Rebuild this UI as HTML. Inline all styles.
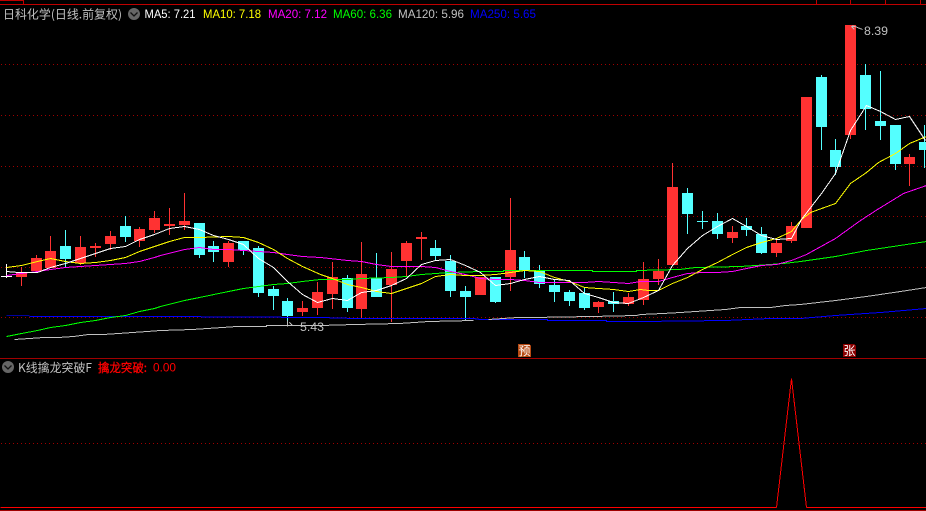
<!DOCTYPE html>
<html><head><meta charset="utf-8"><title>日科化学</title>
<style>
html,body{margin:0;padding:0;background:#000;width:926px;height:511px;overflow:hidden}
svg{display:block;position:absolute;left:0;top:0}
text{font-family:"Liberation Sans","WenQuanYi Zen Hei",sans-serif;font-size:12px}
.c{font-family:"WenQuanYi Zen Hei","Noto Sans CJK SC",sans-serif;font-size:12px}
</style></head><body>
<svg width="926" height="511" viewBox="0 0 926 511" xmlns="http://www.w3.org/2000/svg">
<rect width="926" height="511" fill="#000"/>
<g shape-rendering="crispEdges">
<!-- frame -->
<path fill="#c00000" d="M0 4h926v1H0zM0 0h23v1H0zM23 0h1v4h-1zM816 0h1v4h-1zM850 0h1v4h-1zM885 0h1v4h-1zM920 0h1v4h-1z"/>
<path fill="#a00000" d="M0 358h926v1H0zM0 510h926v1H0z"/>
<!-- grid -->
<g stroke="#a00000" stroke-width="1" stroke-dasharray="1 3" fill="none" transform="translate(0,.5)">
<path d="M1 64H926M1 115H926M1 166H926M1 216H926M1 267H926M1 317H926M1 443H926"/>
</g>
<!-- red candles -->
<path fill="#ff3232" d="M21 267h1v19h-1zM16 272h11v5H16zM36 255h1v16h-1zM31 258h11v13H31zM50 236h1v32h-1zM45 251h11v17H45zM80 236h1v29h-1zM75 247h11v16H75zM95 243h1v14h-1zM90 246h11v2H90zM110 231h1v19h-1zM105 236h11v8h-11zM139 227h1v20h-1zM134 229h11v12h-11zM154 211h1v22h-1zM149 218h11v12h-11zM169 208h1v27h-1zM164 224h11v2h-11zM184 193h1v37h-1zM179 221h11v4h-11zM228 241h1v26h-1zM223 243h11v19h-11zM302 301h1v15h-1zM297 308h11v4h-11zM317 282h1v33h-1zM312 292h11v16h-11zM332 262h1v47h-1zM327 277h11v17h-11zM361 242h1v76h-1zM356 274h11v35h-11zM391 252h1v70h-1zM386 269h11v16h-11zM406 241h1v36h-1zM401 243h11v18h-11zM421 232h1v28h-1zM416 237h11v2h-11zM475 277h11v18h-11zM510 198h1v93h-1zM505 250h11v27h-11zM598 301h1v12h-1zM593 302h11v5h-11zM628 293h1v13h-1zM623 297h11v7h-11zM643 262h1v43h-1zM638 279h11v21h-11zM658 259h1v26h-1zM653 271h11v8h-11zM672 163h1v102h-1zM667 187h11v78h-11zM732 226h1v17h-1zM727 232h11v6h-11zM776 240h1v17h-1zM771 243h11v10h-11zM791 222h1v21h-1zM786 226h11v15h-11zM801 97h11v131h-11zM850 25h1v114h-1zM845 25h11v110h-11zM909 154h1v32h-1zM904 157h11v7h-11z"/>
<!-- cyan candles -->
<path fill="#54ffff" d="M65 230h1v37h-1zM60 246h11v13H60zM125 216h1v26h-1zM120 226h11v11h-11zM199 223h1v35h-1zM194 223h11v32h-11zM213 241h1v21h-1zM208 246h11v6h-11zM243 241h1v14h-1zM238 241h11v9h-11zM258 246h1v51h-1zM253 248h11v45h-11zM273 286h1v24h-1zM268 289h11v7h-11zM287 298h1v27h-1zM282 301h11v15h-11zM347 275h1v37h-1zM342 278h11v30h-11zM376 253h1v44h-1zM371 278h11v19h-11zM435 240h1v20h-1zM430 248h11v8h-11zM450 255h1v42h-1zM445 261h11v30h-11zM465 286h1v34h-1zM460 291h11v6h-11zM495 277h1v26h-1zM490 277h11v25h-11zM524 251h1v27h-1zM519 257h11v13h-11zM539 265h1v23h-1zM534 270h11v14h-11zM554 280h1v22h-1zM549 285h11v7h-11zM569 290h1v16h-1zM564 292h11v9h-11zM584 288h1v22h-1zM579 293h11v15h-11zM613 292h1v20h-1zM608 301h11v3h-11zM687 188h1v46h-1zM682 193h11v21h-11zM702 211h1v18h-1zM697 221h11v1h-11zM717 213h1v26h-1zM712 221h11v13h-11zM746 218h1v18h-1zM741 226h11v4h-11zM761 227h1v27h-1zM756 234h11v19h-11zM821 75h1v75h-1zM816 77h11v50h-11zM835 139h1v36h-1zM830 150h11v17h-11zM865 64h1v66h-1zM860 75h11v34h-11zM880 71h1v69h-1zM875 121h11v5h-11zM895 125h1v45h-1zM890 125h11v39h-11zM924 125h1v43h-1zM919 142h7v8h-7z"/>
<path fill="#fff" d="M6 264h1v14H6zM1 276h11v1H1z"/>
<!-- MA lines -->
<g fill="none" stroke-width="1" transform="translate(.5,.5)">
<polyline stroke="#0000a0" points="6,315 29,315"/>
<polyline stroke="#0000ff" points="29,316 160,316 320,317 355,318 473,318 480,319 547,319 547,320 606,320 606,321 640,321 725,320 769,318 800,318 835,315 880,312 926,308"/>
<polyline stroke="#c0c0c0" points="14,339 29,338 43,337 58,337 73,336 88,334 103,334 118,333 132,332 147,331 160,330 192,329 222,327 236,326 266,326 266,325 320,325 354,324 399,323 414,322 428,321 473,320"/>
<polyline stroke="#c0c0c0" points="488,319 517,317 532,317 591,316 636,315 640,314 662,313 680,312 710,310 725,309 740,307 770,307 785,305 800,304 835,300 866,296 900,291 926,287"/>
<polyline stroke="#00ff00" points="6,336 21,333 37,330 50,327 65,325 80,322 95,320 110,317 125,315 139,311 154,308 160,306 184,300 199,297 228,291 243,288 258,286 273,284 287,283 302,281 320,279 347,279 361,278 391,277 406,276 421,274 435,273 450,272 480,271 503,271 503,270 547,270 592,270 592,271 636,271 636,270 679,269 695,267 740,266 755,265 783,263 800,261 835,256 866,250 926,241"/>
<polyline stroke="#ff00ff" points="6,275 21,273 37,271 50,269 65,267 80,266 95,265 110,264 125,263 139,261 154,257 160,255 184,249 199,247 213,249 228,249 243,250 258,251 273,252 287,254 302,256 320,257 347,260 361,261 376,264 391,266 421,266 435,267 450,271 465,274 480,278 495,279 510,279 524,280 539,282 569,282 584,282 598,281 613,282 628,283 640,281 658,281 672,277 687,273 702,272 717,272 732,271 746,268 761,265 776,264 791,260 806,254 835,238 860,220 877,209 903,193 926,185"/>
<polyline stroke="#ffff00" points="6,267 21,265 37,261 50,258 65,261 80,263 95,262 110,260 125,257 139,251 154,246 169,241 184,237 199,237 228,236 243,237 258,242 273,249 287,258 302,266 320,274 332,278 347,284 361,287 376,291 391,293 406,288 421,283 435,276 450,274 465,275 480,275 495,274 510,272 524,270 539,271 554,277 569,281 584,287 598,288 613,289 628,291 640,289 648,290 658,290 672,283 687,277 702,269 717,262 732,254 746,247 761,242 776,238 791,231 801,219 810,212 835,203 850,183 866,172 878,162 895,153 909,143 926,136"/>
<polyline stroke="#ffffff" points="6,271 18,272 37,272 50,267 65,263 80,258 95,253 110,248 125,246 139,239 154,234 169,228 184,226 199,229 213,235 228,239 243,244 258,258 273,267 287,281 302,294 317,302 332,298 347,300 361,292 376,290 391,285 406,278 421,264 435,260 450,259 465,265 480,272 495,285 510,283 524,279 539,276 554,279 569,280 584,293 598,297 613,302 628,303 643,297 658,290 672,265 687,248 702,235 717,226 732,218 746,226 761,235 776,239 791,238 801,219 821,193 835,173 850,130 866,105 880,111 895,119 909,116 925,140"/>
<!-- leaders -->
<path stroke="#c0c0c0" d="M287 320V326M288 325H298M289 322L292 325M852 25L862 29M851 26H855M851 26L854 29"/>
<!-- indicator -->
<polyline stroke="#ff0000" points="776,507 791,378 806,507"/>
<path stroke="#ff0000" d="M0 507H776M806 507H926"/>
</g>
<!-- badges -->
<path fill="#b84a12" d="M518 344h11l2 2v11h-13z"/>
<path fill="#8b0000" d="M843 344h11l2 2v11h-13z"/>
</g>
<text class="c" x="518.500" y="355" fill="#fff" textLength="12" lengthAdjust="spacingAndGlyphs">预</text>
<text class="c" x="843.500" y="355" fill="#fff" textLength="12" lengthAdjust="spacingAndGlyphs">张</text>
<!-- header -->
<text class="c" x="3" y="18.500" fill="#c0c0c0" textLength="119" lengthAdjust="spacingAndGlyphs">日科化学(日线.前复权)</text>
<circle cx="134" cy="14" r="6" fill="#666"/>
<path d="M130.500 12.500L134 16L137.500 12.500" fill="none" stroke="#111" stroke-width="1.300"/>
<text x="144.500" y="18" fill="#ffffff" textLength="51" lengthAdjust="spacingAndGlyphs">MA5: 7.21</text>
<text x="203" y="18" fill="#ffff00" textLength="58" lengthAdjust="spacingAndGlyphs">MA10: 7.18</text>
<text x="268" y="18" fill="#ff00ff" textLength="59" lengthAdjust="spacingAndGlyphs">MA20: 7.12</text>
<text x="333" y="18" fill="#00ff00" textLength="59" lengthAdjust="spacingAndGlyphs">MA60: 6.36</text>
<text x="398" y="18" fill="#c0c0c0" textLength="66" lengthAdjust="spacingAndGlyphs">MA120: 5.96</text>
<text x="470" y="18" fill="#0000ff" textLength="66" lengthAdjust="spacingAndGlyphs">MA250: 5.65</text>
<text x="864" y="35" fill="#c0c0c0" textLength="24" lengthAdjust="spacingAndGlyphs">8.39</text>
<text x="300" y="331" fill="#c0c0c0" textLength="24" lengthAdjust="spacingAndGlyphs">5.43</text>
<!-- lower panel header -->
<circle cx="8" cy="367" r="6" fill="#666"/>
<path d="M4.500 365.500L8 369L11.500 365.500" fill="none" stroke="#111" stroke-width="1.300"/>
<text class="c" x="18" y="372" fill="#c0c0c0" textLength="74" lengthAdjust="spacingAndGlyphs">K线擒龙突破F</text>
<text class="c" x="98" y="372" fill="#ff0000" stroke="#ff0000" stroke-width=".3" textLength="49" lengthAdjust="spacingAndGlyphs">擒龙突破:</text>
<text x="153" y="371.500" fill="#ff0000" textLength="23" lengthAdjust="spacingAndGlyphs">0.00</text>
</svg>
</body></html>
